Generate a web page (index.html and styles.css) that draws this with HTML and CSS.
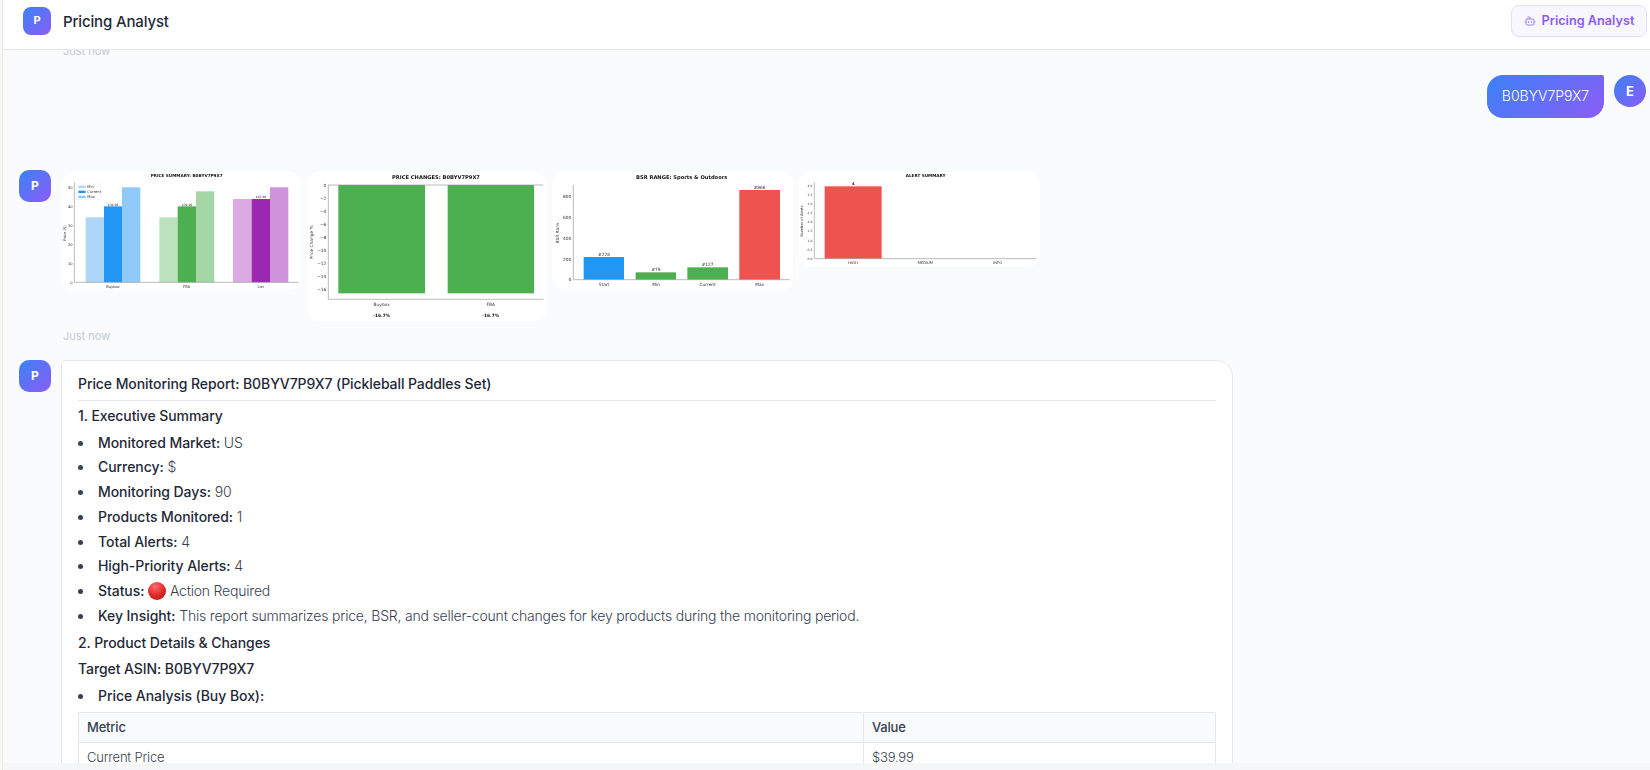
FILE: index.html
```html
<!DOCTYPE html>
<html lang="en">
<head>
    <meta charset="UTF-8">
    <title>Pricing Analyst</title>
    <link rel="stylesheet" href="styles.css">
</head>
<body>
    <div class="app">
        <header class="topbar">
            <div class="brand">
                <div class="logo">P</div>
                <div class="brand-name">Pricing Analyst</div>
            </div>
            <div class="agent-badge">
                <svg class="bot-icon" viewBox="0 0 24 24" fill="none" stroke="currentColor" stroke-width="2" stroke-linecap="round" stroke-linejoin="round">
                    <path d="M12 8V4H8"/>
                    <rect x="4" y="8" width="16" height="12" rx="2"/>
                    <path d="M2 14h2M20 14h2M15 13v2M9 13v2"/>
                </svg>
                Pricing Analyst
            </div>
        </header>

        <main class="chat">
            <div class="thread">
                <div class="time">Just now</div>

                <div class="msg msg-user">
                    <div class="bubble">B0BYV7P9X7</div>
                    <div class="avatar avatar-round">E</div>
                </div>

                <div class="msg msg-charts">
                    <div class="avatar">P</div>
                    <div class="msg-body">
                        <div class="charts">
                            <svg class="chart" width="240" height="118" viewBox="18 21 720 354">
                                <text class="c-title" x="395" y="36">PRICE SUMMARY: B0BYV7P9X7</text>
                                <rect x="92" y="157" width="55" height="195" fill="#aed6f9"/>
                                <rect x="147" y="124" width="54" height="228" fill="#2196f3"/>
                                <rect x="201" y="67" width="55" height="285" fill="#90caf9"/>
                                <rect x="313" y="157" width="55" height="195" fill="#bce2bd"/>
                                <rect x="368" y="124" width="55" height="228" fill="#4caf50"/>
                                <rect x="423" y="79" width="55" height="273" fill="#a5d6a7"/>
                                <rect x="534" y="102" width="56" height="250" fill="#d9abe2"/>
                                <rect x="590" y="102" width="55" height="250" fill="#9c27b0"/>
                                <rect x="645" y="67" width="55" height="285" fill="#ce93d8"/>
                                <path class="c-axis" d="M58 52V352H730"/>
                                <text class="c-tick c-end" x="53" y="71">50</text>
                                <text class="c-tick c-end" x="53" y="128">40</text>
                                <text class="c-tick c-end" x="53" y="185">30</text>
                                <text class="c-tick c-end" x="53" y="242">20</text>
                                <text class="c-tick c-end" x="53" y="299">10</text>
                                <text class="c-tick c-end" x="53" y="356">0</text>
                                <text class="c-tick" transform="translate(33 204) rotate(-90)">Price ($)</text>
                                <text class="c-tick" x="174" y="369">Buybox</text>
                                <text class="c-tick" x="395" y="369">FBA</text>
                                <text class="c-tick" x="617" y="369">List</text>
                                <text class="c-small" x="174" y="122">$39.99</text>
                                <text class="c-small" x="396" y="122">$39.99</text>
                                <text class="c-small" x="618" y="100">$43.99</text>
                                <rect x="65" y="57" width="72" height="46" fill="#fff" stroke="#e6e6e6"/>
                                <rect x="70" y="62" width="22" height="7" fill="#aed6f9"/>
                                <rect x="70" y="77" width="22" height="7" fill="#2196f3"/>
                                <rect x="70" y="92" width="22" height="7" fill="#90caf9"/>
                                <text class="c-tick c-start" x="97" y="69">Min</text>
                                <text class="c-tick c-start" x="97" y="84">Current</text>
                                <text class="c-tick c-start" x="97" y="99">Max</text>
                            </svg>
                            <svg class="chart" width="240" height="149" viewBox="21 21 720 447">
                                <text class="c-title c-title-lg" x="408" y="41">PRICE CHANGES: B0BYV7P9X7</text>
                                <rect x="115" y="60" width="260" height="325" fill="#4caf50"/>
                                <rect x="443" y="60" width="259" height="325" fill="#4caf50"/>
                                <path class="c-axis" d="M730 60H85V403H730"/>
                                <text class="c-tick-lg c-end" x="79" y="65">0</text>
                                <text class="c-tick-lg c-end" x="79" y="105">−2</text>
                                <text class="c-tick-lg c-end" x="79" y="144">−4</text>
                                <text class="c-tick-lg c-end" x="79" y="183">−6</text>
                                <text class="c-tick-lg c-end" x="79" y="222">−8</text>
                                <text class="c-tick-lg c-end" x="79" y="261">−10</text>
                                <text class="c-tick-lg c-end" x="79" y="300">−12</text>
                                <text class="c-tick-lg c-end" x="79" y="338">−14</text>
                                <text class="c-tick-lg c-end" x="79" y="377">−16</text>
                                <text class="c-tick-lg" transform="translate(39 232) rotate(-90)">Price Change %</text>
                                <text class="c-tick-lg" x="245" y="422">Buybox</text>
                                <text class="c-tick-lg" x="572" y="422">FBA</text>
                                <text class="c-bold c-bold-lg" x="245" y="456">-16.7%</text>
                                <text class="c-bold c-bold-lg" x="572" y="456">-16.7%</text>
                            </svg>
                            <svg class="chart" width="240" height="118" viewBox="9 21 720 354">
                                <text class="c-title c-title-lg" x="395" y="41">BSR RANGE: Sports &amp; Outdoors</text>
                                <rect x="101" y="276" width="121" height="68" fill="#2196f3"/>
                                <rect x="257" y="322" width="121" height="22" fill="#4caf50"/>
                                <rect x="412" y="307" width="122" height="37" fill="#4caf50"/>
                                <rect x="568" y="75" width="122" height="269" fill="#ef5350"/>
                                <path class="c-axis" d="M70 60V344H720"/>
                                <text class="c-tick-lg c-end" x="64" y="99">800</text>
                                <text class="c-tick-lg c-end" x="64" y="162">600</text>
                                <text class="c-tick-lg c-end" x="64" y="225">400</text>
                                <text class="c-tick-lg c-end" x="64" y="287">200</text>
                                <text class="c-tick-lg c-end" x="64" y="349">0</text>
                                <text class="c-tick-lg" transform="translate(28 204) rotate(-90)">BSR Rank</text>
                                <text class="c-tick-lg" x="162" y="364">Start</text>
                                <text class="c-tick-lg" x="318" y="364">Min</text>
                                <text class="c-tick-lg" x="473" y="364">Current</text>
                                <text class="c-tick-lg" x="629" y="364">Max</text>
                                <text class="c-tick-lg" x="162" y="272">#226</text>
                                <text class="c-tick-lg" x="318" y="318">#79</text>
                                <text class="c-tick-lg" x="473" y="303">#127</text>
                                <text class="c-tick-lg" x="629" y="71">#866</text>
                            </svg>
                            <svg class="chart" width="240" height="95" viewBox="12 21 720 285">
                                <text class="c-title" x="392" y="37">ALERT SUMMARY</text>
                                <rect x="89" y="64" width="171" height="217" fill="#ef5350"/>
                                <path class="c-axis" d="M58 52V281H725"/>
                                <text class="c-small c-end" x="52" y="67">4.0</text>
                                <text class="c-small c-end" x="52" y="94">3.5</text>
                                <text class="c-small c-end" x="52" y="121">3.0</text>
                                <text class="c-small c-end" x="52" y="148">2.5</text>
                                <text class="c-small c-end" x="52" y="175">2.0</text>
                                <text class="c-small c-end" x="52" y="202">1.5</text>
                                <text class="c-small c-end" x="52" y="230">1.0</text>
                                <text class="c-small c-end" x="52" y="257">0.5</text>
                                <text class="c-small c-end" x="52" y="284">0.0</text>
                                <text class="c-tick" transform="translate(25 168) rotate(-90)">Number of Alerts</text>
                                <text class="c-bold" x="175" y="61">4</text>
                                <text class="c-tick" x="174" y="297">HIGH</text>
                                <text class="c-tick" x="391" y="297">MEDIUM</text>
                                <text class="c-tick" x="608" y="297">INFO</text>
                            </svg>
                        </div>
                        <div class="time time-below">Just now</div>
                    </div>
                </div>

                <div class="msg">
                    <div class="avatar">P</div>
                    <div class="card">
                        <h1>Price Monitoring Report: B0BYV7P9X7 (Pickleball Paddles Set)</h1>
                        <h2>1. Executive Summary</h2>
                        <ul>
                            <li><strong>Monitored Market:</strong> US</li>
                            <li><strong>Currency:</strong> $</li>
                            <li><strong>Monitoring Days:</strong> 90</li>
                            <li><strong>Products Monitored:</strong> 1</li>
                            <li><strong>Total Alerts:</strong> 4</li>
                            <li><strong>High-Priority Alerts:</strong> 4</li>
                            <li><strong>Status:</strong> <span class="red-dot"></span> Action Required</li>
                            <li><strong>Key Insight:</strong> This report summarizes price, BSR, and seller-count changes for key products during the monitoring period.</li>
                        </ul>
                        <h2 class="section">2. Product Details &amp; Changes</h2>
                        <h3>Target ASIN: B0BYV7P9X7</h3>
                        <ul class="sub-list">
                            <li><strong>Price Analysis (Buy Box):</strong></li>
                        </ul>
                        <table>
                            <thead>
                                <tr><th class="col-metric">Metric</th><th>Value</th></tr>
                            </thead>
                            <tbody>
                                <tr><td>Current Price</td><td>$39.99</td></tr>
                            </tbody>
                        </table>
                    </div>
                </div>
            </div>
        </main>

        <div class="bottom-strip"></div>
    </div>
</body>
</html>
```

FILE: styles.css
```css
* {
    box-sizing: border-box;
}
body {
    margin: 0;
    height: 770px;
    overflow: hidden;
    font-family: Inter, "Noto Sans", sans-serif;
    font-size: 14px;
    line-height: 1.6;
    color: #4b5563;
    background-color: #faf6f0;
}
.app {
    height: 770px;
    margin-left: 2px;
    border-left: 1px solid #e9ebee;
    display: flex;
    flex-direction: column;
    background-color: #f9fbfd;
}
.topbar {
    height: 50px;
    flex-shrink: 0;
    display: flex;
    justify-content: space-between;
    align-items: flex-start;
    padding: 5px 3px 0 20px;
    background-color: #fff;
    border-bottom: 1px solid #e5e7eb;
    position: relative;
    z-index: 1;
}
.brand {
    display: flex;
    align-items: center;
    gap: 12px;
    margin-top: 2px;
}
.logo {
    width: 28px;
    height: 28px;
    border-radius: 8px;
    display: flex;
    align-items: center;
    justify-content: center;
    color: #fff;
    font-size: 11px;
    font-weight: 700;
    background: linear-gradient(135deg, #3b82f6, #8b5cf6);
}
.brand-name {
    padding-top: 1px;
    font-size: 15px;
    font-weight: 500;
    letter-spacing: -0.15px;
    color: #1f2937;
}
.agent-badge {
    width: 136px;
    height: 32px;
    display: flex;
    align-items: center;
    justify-content: center;
    gap: 6px;
    border: 1px solid #e4dffa;
    border-radius: 8px;
    background-color: #f8f6ff;
    color: #8b5cf6;
    font-size: 12.7px;
    font-weight: 600;
}
.bot-icon {
    width: 12px;
    height: 12px;
    opacity: 0.75;
}
.chat {
    flex: 1;
    min-height: 0;
    overflow: hidden;
}
.thread {
    margin-top: -7px;
    padding: 0 4px 0 16px;
}
.time {
    padding-left: 44px;
    font-size: 11px;
    line-height: 16px;
    color: #c3c9d3;
}
.time-below {
    padding-left: 2px;
    margin-top: 7px;
}
.msg {
    display: flex;
    gap: 10px;
    align-items: flex-start;
}
.msg-user {
    justify-content: flex-end;
    margin-top: 16px;
    margin-bottom: 52px;
}
.msg-charts {
    margin-bottom: 16px;
}
.avatar {
    width: 32px;
    height: 32px;
    flex-shrink: 0;
    border-radius: 10px;
    display: flex;
    align-items: center;
    justify-content: center;
    color: #fff;
    font-size: 12px;
    font-weight: 700;
    background: linear-gradient(135deg, #3b82f6, #8b5cf6);
}
.avatar-round {
    border-radius: 50%;
    font-size: 13px;
}
.bubble {
    height: 43px;
    width: 117px;
    display: flex;
    align-items: center;
    justify-content: center;
    border-radius: 16px 2px 16px 16px;
    font-weight: 300;
    color: #fff;
    background: linear-gradient(135deg, #3b82f6, #8b5cf6);
}
.msg-body {
    margin-top: 2px;
}
.charts {
    display: flex;
    gap: 6px;
    align-items: flex-start;
}
.chart {
    display: block;
    background-color: #fff;
    border-radius: 12px;
    filter: blur(0.4px);
}
.chart text {
    font-family: "DejaVu Sans", sans-serif;
    text-anchor: middle;
    fill: #333;
}
.chart .c-title {
    font-size: 12.5px;
    font-weight: 700;
    fill: #111;
}
.chart .c-title-lg {
    font-size: 15.5px;
}
.chart .c-tick {
    font-size: 11px;
}
.chart .c-tick-lg {
    font-size: 13px;
}
.chart .c-small {
    font-size: 9px;
}
.chart .c-bold {
    font-size: 11px;
    font-weight: 700;
    fill: #111;
}
.chart .c-bold-lg {
    font-size: 13px;
}
.chart .c-end {
    text-anchor: end;
}
.chart .c-start {
    text-anchor: start;
}
.c-axis {
    fill: none;
    stroke: #999;
    stroke-width: 2;
}
.card {
    width: 1172px;
    flex-shrink: 0;
    padding: 12px 16px;
    font-weight: 300;
    letter-spacing: -0.2px;
    color: #374151;
    background-color: #fff;
    border: 1px solid #e5e7eb;
    border-radius: 4px 16px 16px 16px;
}
h1, h2, h3 {
    margin: 0;
    font-size: 14px;
    font-weight: 500;
    letter-spacing: -0.08px;
    color: #1f2937;
}
h1 {
    padding-bottom: 5px;
    border-bottom: 1px solid #e5e7eb;
    margin-bottom: 4px;
}
h2.section {
    margin-top: 5px;
}
h3 {
    margin-top: 4px;
}
ul {
    margin: 4px 0 0;
    padding-left: 20px;
    list-style: none;
}
li {
    position: relative;
    margin-bottom: 2.3px;
    height: 22.4px;
}
li::before {
    content: "";
    position: absolute;
    left: -20px;
    top: 9px;
    width: 5px;
    height: 5px;
    border-radius: 50%;
    background-color: #374151;
}
strong {
    font-weight: 500;
    letter-spacing: -0.06px;
    color: #1f2937;
}
.sub-list {
    margin-top: 4.5px;
    margin-bottom: 4px;
}
.red-dot {
    display: inline-block;
    width: 18px;
    height: 18px;
    vertical-align: -4px;
    border-radius: 50%;
    background: radial-gradient(circle at 40% 25%, #ff6b6b, #dc2626 55%, #a81b1b);
}
table {
    width: 1138px;
    border-collapse: collapse;
    table-layout: fixed;
    font-size: 13px;
    line-height: 20px;
}
th, td {
    border: 1px solid #e5e7eb;
    padding: 4px 8px;
    text-align: left;
}
th {
    padding-bottom: 5px;
    font-weight: 500;
    color: #374151;
    background-color: #f9fafb;
}
.col-metric {
    width: 785px;
}
.bottom-strip {
    height: 7px;
    flex-shrink: 0;
    background-color: #f5f6f7;
    position: relative;
    z-index: 1;
}
```
